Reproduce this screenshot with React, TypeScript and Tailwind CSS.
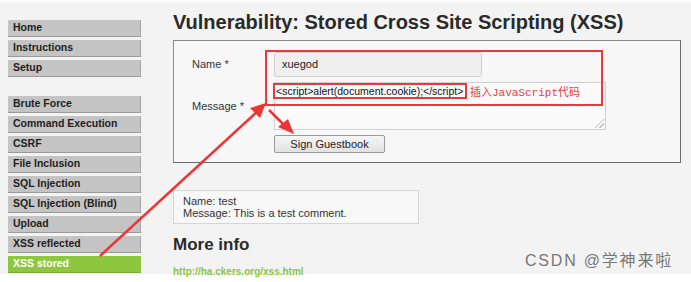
import React from "react";

const menuTop = ["Home", "Instructions", "Setup"];
const menuVulns = [
  "Brute Force",
  "Command Execution",
  "CSRF",
  "File Inclusion",
  "SQL Injection",
  "SQL Injection (Blind)",
  "Upload",
  "XSS reflected",
  "XSS stored",
];

function MenuItem({ label, active }: { label: string; active?: boolean }) {
  return (
    <div
      className={
        active
          ? "h-[17px] mb-[3px] pl-[5px] flex items-center bg-[#8dc63f] text-white text-[10.5px] font-bold border-b border-[#7aa834]"
          : "h-[17px] mb-[3px] pl-[5px] flex items-center bg-[#c4c4c4] text-[#1e1e1e] text-[10.5px] font-bold border-b border-[#9a9a9a] border-r border-r-[#a8a8a8]"
      }
    >
      {label}
    </div>
  );
}

export default function App() {
  return (
    <div className="relative w-[691px] h-[282px] overflow-hidden bg-white font-['Liberation_Sans',Arial,sans-serif]">
      <div className="flex h-[274px] bg-[#f3f3f3] border-t-[3px] border-[#fafafa]">
        <div className="w-[133px] ml-[8px] pt-[17px] shrink-0">
          {menuTop.map((m) => (
            <MenuItem key={m} label={m} />
          ))}
          <div className="h-[16px]" />
          {menuVulns.map((m) => (
            <MenuItem key={m} label={m} active={m === "XSS stored"} />
          ))}
        </div>

        <div className="ml-[32px] w-[508px]">
          <h1 className="text-[20px] leading-[24px] font-bold text-[#2a2a2a] mt-[7px] whitespace-nowrap">
            Vulnerability: Stored Cross Site Scripting (XSS)
          </h1>

          <div className="relative mt-[6px] h-[123px] border border-[#8a8a8a] border-r-[#6a6a6a] border-b-[#6a6a6a] bg-[#f7f7f7] pt-[11px] pl-[18px]">
            <div className="flex items-center">
              <div className="w-[82px] text-[11px] text-[#333]">Name *</div>
              <div className="w-[208px] h-[25px] rounded-[3px] border border-[#cfcfcf] bg-[#efefef] pl-[7px] flex items-center text-[11px] text-[#222]">
                xuegod
              </div>
            </div>
            <div className="flex items-center mt-[5px]">
              <div className="w-[82px] text-[11px] text-[#333]">Message *</div>
              <div className="relative w-[332px] h-[48px] border border-[#d0d0d0] bg-[#fafafa] pl-[1px] pt-[2px] text-[10.5px] leading-[13px] text-[#111]">
                &lt;script&gt;alert(document.cookie);&lt;/script&gt;
                <div className="absolute right-[1px] bottom-[1px] w-[9px] h-[9px] bg-[linear-gradient(135deg,transparent_45%,#bbb_45%,#bbb_55%,transparent_55%,transparent_70%,#bbb_70%,#bbb_80%,transparent_80%)]" />
              </div>
            </div>
            <div className="flex mt-[5px]">
              <div className="w-[82px]" />
              <div className="w-[111px] h-[18px] rounded-[2px] border border-[#9a9a9a] bg-[linear-gradient(#f6f6f6,#e2e2e2)] flex items-center justify-center text-[11px] text-[#222]">
                Sign Guestbook
              </div>
            </div>

            <div className="absolute left-[91px] top-[9px] w-[338px] h-[56px] border-2 border-[#e83a3a]" />
            <div className="absolute left-[99px] top-[42px] w-[194px] h-[16px] border-2 border-[#e83a3a]" />
            <div className="absolute left-[296px] top-[45px] text-[11px] leading-[14px] text-[#ee3c3c] font-['Liberation_Mono','Noto_Sans_CJK_SC',monospace] whitespace-nowrap">
              插入JavaScript代码
            </div>
          </div>

          <div className="mt-[27px] w-[246px] h-[34px] border border-[#d6d6d6] bg-[#f8f8f8] pl-[9px] pt-[4px] text-[11px] leading-[12px] text-[#333]">
            <div>Name: test</div>
            <div>Message: This is a test comment.</div>
          </div>

          <h2 className="mt-[11px] text-[17px] leading-[20px] font-bold text-[#2a2a2a]">More info</h2>
          <div className="mt-[9px] text-[10px] font-bold text-[#8dc63f]">http://ha.ckers.org/xss.html</div>
        </div>
      </div>

      <div className="absolute left-[525px] top-[252px] text-[16px] leading-[18px] tracking-[1.8px] text-[#777] font-['Liberation_Sans','Noto_Sans_CJK_SC',sans-serif] whitespace-nowrap">
        CSDN @学神来啦
      </div>

      <svg className="absolute left-0 top-0 pointer-events-none" width="691" height="282">
        <line x1="100" y1="256" x2="259" y2="110" stroke="#ee3535" strokeWidth="2.5" />
        <polygon points="266,103 250,108 260,118" fill="#ee3535" />
        <line x1="269" y1="110" x2="286" y2="127" stroke="#ee3535" strokeWidth="2.5" />
        <polygon points="294,134 278,127 288,119" fill="#ee3535" />
      </svg>
    </div>
  );
}
